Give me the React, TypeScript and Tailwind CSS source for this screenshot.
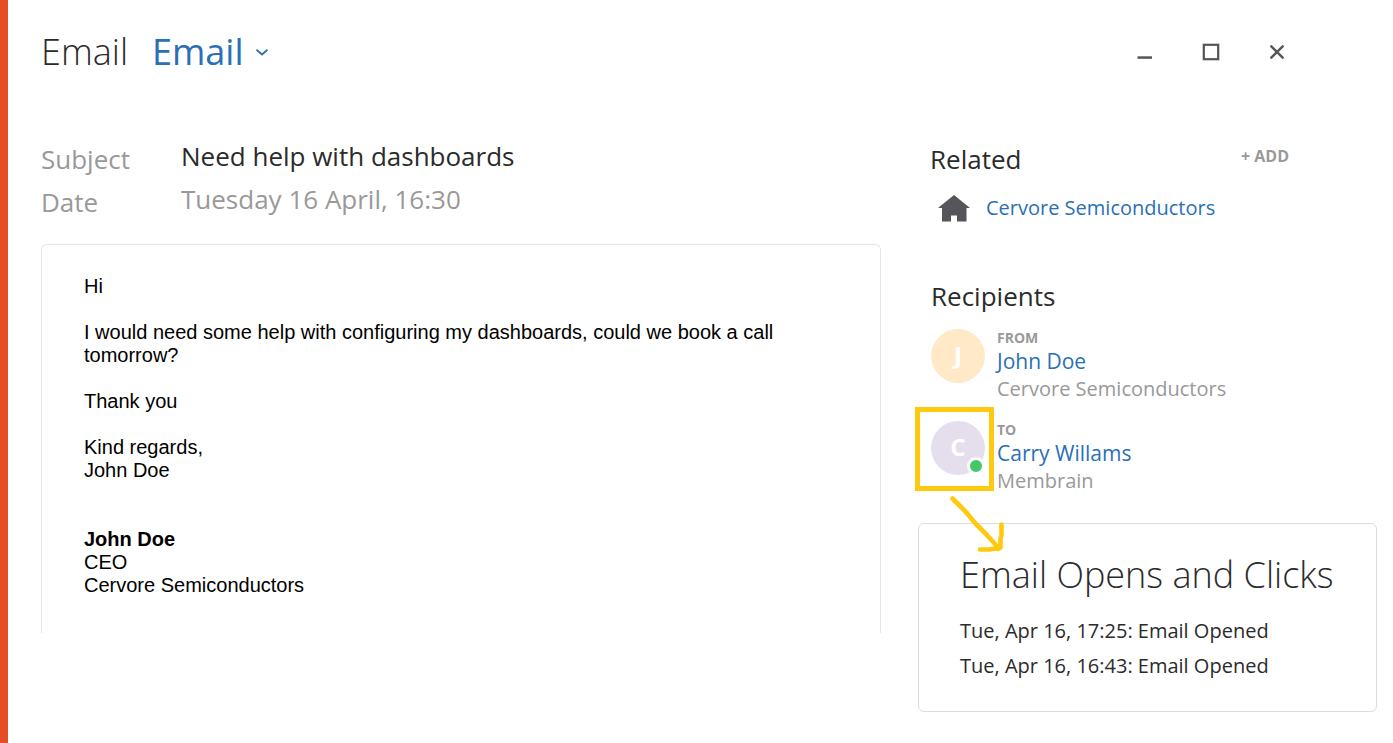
import { useState } from 'react'

type Recipient = {
  role: string
  name: string
  company: string
  initial: string
  color: string
  online?: boolean
}

const recipients: Recipient[] = [
  { role: 'FROM', name: 'John Doe', company: 'Cervore Semiconductors', initial: 'J', color: 'bg-[#ffe9c7]' },
  { role: 'TO', name: 'Carry Willams', company: 'Membrain', initial: 'C', color: 'bg-[#e5dfed]', online: true },
]

const events = [
  { time: 'Tue, Apr 16, 17:25', label: 'Email Opened' },
  { time: 'Tue, Apr 16, 16:43', label: 'Email Opened' },
]

function WindowControls() {
  return (
    <div className="flex items-center gap-[42px] text-[#555]">
      <button type="button" aria-label="Minimize" className="size-6">
        <svg viewBox="0 0 24 24" className="size-6" fill="currentColor">
          <rect x="4.5" y="16.3" width="14.5" height="2.5" />
        </svg>
      </button>
      <button type="button" aria-label="Maximize" className="size-6">
        <svg viewBox="0 0 24 24" className="size-6" fill="none" stroke="currentColor" strokeWidth="2.2">
          <rect x="4.8" y="4.8" width="14.4" height="14.4" />
        </svg>
      </button>
      <button type="button" aria-label="Close" className="size-6">
        <svg viewBox="0 0 24 24" className="size-6" fill="none" stroke="currentColor" strokeWidth="2.4" strokeLinecap="round">
          <path d="M6.300 6.300l11.400 11.400M17.700 6.300L6.300 17.700" />
        </svg>
      </button>
    </div>
  )
}

// Yellow marker around the avatar, with an arrow down to the activity card
function Callout() {
  return (
    <>
      <div className="absolute -left-4 -top-3.5 h-[84px] w-[79px] border-[5px] border-[#ffc90e]" />
      <svg
        className="absolute left-4 top-[72px] z-10 h-[62px] w-[60px]"
        viewBox="0 0 60 62"
        fill="none"
        stroke="#ffc90e"
        strokeWidth="4.6"
        strokeLinecap="round"
        strokeLinejoin="round"
      >
        <path d="M5.500 5.500L19 19L28 30L39 41L52 55.500M54.500 31.500V42L53.500 46V54.500L51 56M33 56.500H42L51 55" />
      </svg>
    </>
  )
}

function RecipientRow({ r }: { r: Recipient }) {
  return (
    <li className="flex gap-3">
      <div className="relative size-[54px] shrink-0">
        <div className={`flex size-full items-center justify-center rounded-full pb-0.5 text-2xl font-bold text-white ${r.color}`}>
          {r.initial}
        </div>
        {r.online && (
          <>
            <span className="absolute bottom-0 right-0 size-[18px] rounded-full border-[3px] border-white bg-[#44c767]" />
            <Callout />
          </>
        )}
      </div>
      <div>
        <p className="text-[14px] font-bold leading-[18px] text-[#999]">{r.role}</p>
        <a href="#" className="block text-[21px] leading-7 text-[#2a70b5]">{r.name}</a>
        <p className="text-xl leading-7 text-[#999]">{r.company}</p>
      </div>
    </li>
  )
}

export default function App() {
  const [type, setType] = useState('Email')

  return (
    <div className="min-h-screen border-l-8 border-[#e44d26] bg-white pl-[33px] pr-4 font-['Open_Sans',sans-serif] text-[#2b2b2b]">
      <header className="flex items-center justify-between pr-[88px] pt-7">
        <div className="flex items-center text-[36px] leading-[48px]">
          <h1 className="font-light">Email</h1>
          <label className="relative ml-6 flex items-center text-[#2a70b5]">
            <select
              aria-label="Activity type"
              value={type}
              onChange={(e) => setType(e.target.value)}
              className="appearance-none bg-transparent pr-7 outline-none [field-sizing:content]"
            >
              <option>Email</option>
            </select>
            <svg viewBox="0 0 12 8" className="pointer-events-none absolute right-1 h-2 w-3" fill="none" stroke="currentColor" strokeWidth="1.8">
              <path d="M0.500 1.700l5.500 4.800 5.500-4.800" />
            </svg>
          </label>
        </div>
        <WindowControls />
      </header>

      <div className="mt-[59px] grid grid-cols-[minmax(0,840fr)_minmax(0,459fr)] gap-x-[37px]">
        <main>
          <dl className="grid grid-cols-[140px_1fr] text-[26px] leading-[43px] text-[#999]">
            <dt className="translate-y-[3px]">Subject</dt>
            <dd className="text-[#2b2b2b]">Need help with dashboards</dd>
            <dt className="translate-y-[3px]">Date</dt>
            <dd>Tuesday 16 April, 16:30</dd>
          </dl>

          <article className="mt-[23px] rounded-t-md border border-b-0 border-[#e6e6e6] px-[42px] pb-9 pt-[30px] font-['Liberation_Sans',Arial,sans-serif] text-xl leading-[23px] text-black">
            <p>Hi</p>
            <p className="mt-[23px]">
              I would need some help with configuring my dashboards, could we book a call tomorrow?
            </p>
            <p className="mt-[23px]">Thank you</p>
            <p className="mt-[23px]">
              Kind regards,
              <br />
              John Doe
            </p>
            <p className="mt-[46px]">
              <strong>John Doe</strong>
              <br />
              CEO
              <br />
              Cervore Semiconductors
            </p>
          </article>
        </main>

        <aside>
          <section className="pl-3 pr-[88px]">
            <div className="flex items-center justify-between">
              <h2 className="pt-[3px] text-[26px] leading-[43px]">Related</h2>
              <button type="button" className="pb-1 text-base font-bold leading-5 text-[#999]">+ ADD</button>
            </div>
            <div className="mt-[13px] flex items-center pl-2">
              <svg viewBox="0 0 32 27" className="h-[27px] w-8" fill="#55555a">
                <path d="M16 0L32 13H28.500V26.500H19V20.500H13V26.500H4V13H0Z" />
              </svg>
              <a href="#" className="ml-4 text-xl leading-7 text-[#2a70b5]">Cervore Semiconductors</a>
            </div>
          </section>

          <section className="mt-[53px] pl-[13px]">
            <h2 className="text-[26px] leading-[43px]">Recipients</h2>
            <ul className="mt-[11px] space-y-[18px]">
              {recipients.map((r) => (
                <RecipientRow key={r.role} r={r} />
              ))}
            </ul>
          </section>

          <section className="mt-7 rounded-md border border-[#dcdcdc] px-[41px] pb-7 pt-[27px]">
            <h2 className="whitespace-nowrap text-[36px] font-light leading-[48px]">Email Opens and Clicks</h2>
            <ul className="mt-[14px] text-xl leading-[35px]">
              {events.map((e) => (
                <li key={e.time}>
                  {e.time}: {e.label}
                </li>
              ))}
            </ul>
          </section>
        </aside>
      </div>
    </div>
  )
}
